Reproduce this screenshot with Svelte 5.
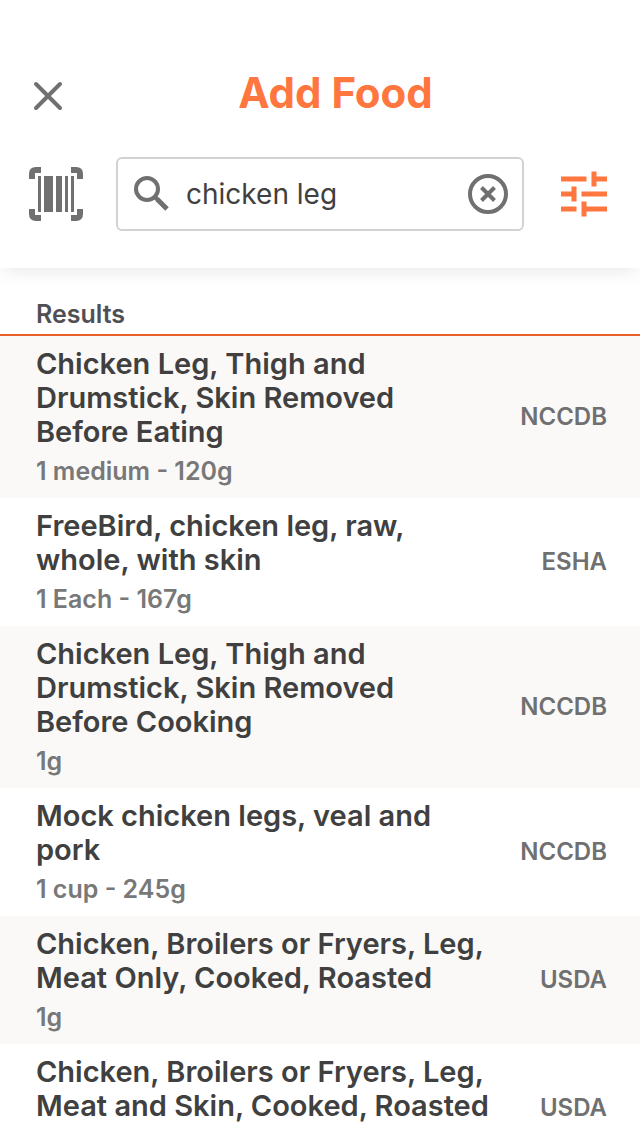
<script lang="ts">
  interface Food {
    name: string;
    serving?: string;
    source: string;
  }

  let query = $state("chicken leg");

  const foods: Food[] = [
    { name: "Chicken Leg, Thigh and Drumstick, Skin Removed Before Eating", serving: "1 medium - 120g", source: "NCCDB" },
    { name: "FreeBird, chicken leg, raw, whole, with skin", serving: "1 Each - 167g", source: "ESHA" },
    { name: "Chicken Leg, Thigh and Drumstick, Skin Removed Before Cooking", serving: "1g", source: "NCCDB" },
    { name: "Mock chicken legs, veal and pork", serving: "1 cup - 245g", source: "NCCDB" },
    { name: "Chicken, Broilers or Fryers, Leg, Meat Only, Cooked, Roasted", serving: "1g", source: "USDA" },
    { name: "Chicken, Broilers or Fryers, Leg, Meat and Skin, Cooked, Roasted", source: "USDA" },
  ];
</script>

<div class="screen">
  <header class="header">
    <div class="title-bar">
      <button class="icon-btn close" aria-label="Close">
        <svg width="32" height="32" viewBox="0 0 32 32">
          <path d="M4 4L28 28M28 4L4 28" fill="none" stroke="#707070" stroke-width="4" stroke-linecap="round" />
        </svg>
      </button>
      <h1>Add Food</h1>
    </div>

    <div class="search-bar">
      <button class="icon-btn" aria-label="Scan barcode">
        <svg width="54" height="54" viewBox="0 0 54 54" fill="#707070">
          <path d="M0 12V7Q0 0 7 0H12V6H6V12ZM42 0H47Q54 0 54 7V12H48V6H42ZM0 42H6V48H12V54H7Q0 54 0 47ZM48 42H54V47Q54 54 47 54H42V48H48Z" />
          <path d="M9 9H12V45H9ZM15 9H24V45H15ZM27 9H33V45H27ZM36 9H39V45H36ZM42 9H45V45H42Z" />
        </svg>
      </button>

      <div class="search-box">
        <svg width="36" height="36" viewBox="0 0 36 36" fill="none" stroke="#707070" stroke-width="4">
          <circle cx="13" cy="13" r="11" />
          <path d="M21 21L24 24" />
          <path d="M23 23L33 33" stroke-width="5" />
        </svg>
        <input type="text" aria-label="Search foods" bind:value={query} />
        <button class="icon-btn" aria-label="Clear search" onclick={() => (query = "")}>
          <svg width="40" height="40" viewBox="0 0 40 40" fill="none" stroke="#707070" stroke-width="4">
            <circle cx="20" cy="20" r="18" />
            <path d="M13.500 13.500L26.500 26.500M26.500 13.500L13.500 26.500" />
          </svg>
        </button>
      </div>

      <button class="icon-btn" aria-label="Filters">
        <svg width="46" height="46" viewBox="0 0 46 46" fill="#ff763f">
          <path d="M0 5.500H25.500V10.500H0ZM30.500 0.500H35.500V5.500H46V10.500H35.500V15.500H30.500Z" />
          <path d="M0 20.500H10.500V15.500H15.500V30.500H10.500V25.500H0ZM20.500 20.500H46V25.500H20.500Z" />
          <path d="M0 35.500H15.500V40.500H0ZM20.500 30.500H25.500V35.500H46V40.500H25.500V45.500H20.500Z" />
        </svg>
      </button>
    </div>
  </header>

  <main class="results">
    <h2>Results</h2>
    <ul>
      {#each foods as food}
        <li>
          <div class="details">
            <p class="name">{food.name}</p>
            {#if food.serving}
              <p class="serving">{food.serving}</p>
            {/if}
          </div>
          <span class="source">{food.source}</span>
        </li>
      {/each}
    </ul>
  </main>
</div>

<style>
.screen {
  display: flex;
  flex-direction: column;
  height: 100vh;
  overflow: hidden;
  background: #fff;
  color: #404040;
  font-family: "Inter", sans-serif;
}

h1, h2, p, ul {
  margin: 0;
  padding: 0;
}

.header {
  flex: none;
  padding: 63px 33px 37px 29px;
  background: #fff;
  box-shadow: 0 6px 18px -4px rgba(0, 0, 0, 0.1);
  z-index: 1;
}

.title-bar {
  display: flex;
  align-items: center;
  padding-left: 3px;
  margin-bottom: 34px;
}

h1 {
  flex: 1;
  text-align: center;
  font-size: 42px;
  font-weight: 700;
  line-height: 60px;
  color: #ff763f;
}

.icon-btn {
  flex: none;
  display: block;
  padding: 0;
  border: none;
  background: none;
  cursor: pointer;
}

.icon-btn svg {
  display: block;
}

.close {
  padding-top: 6px;
}

.search-bar {
  display: flex;
  align-items: center;
  justify-content: space-between;
}

.search-box {
  flex: 1;
  display: flex;
  align-items: center;
  box-sizing: border-box;
  height: 74px;
  min-width: 0;
  margin: 0 37px 0 33px;
  padding: 0 14px 0 16px;
  border: 2px solid #d2d2d2;
  border-radius: 6px;
}

.search-box svg {
  flex: none;
}

.search-box input {
  flex: 1;
  min-width: 0;
  padding: 0 16px;
  border: none;
  outline: none;
  background: none;
  color: #404040;
  font-family: inherit;
  font-size: 28px;
  line-height: 36px;
}

.results {
  flex: 1;
  min-height: 0;
  overflow-y: auto;
  scrollbar-width: none;
}

h2 {
  padding: 30px 36px 4px;
  border-bottom: 2px solid #e8602c;
  font-size: 25px;
  font-weight: 600;
  line-height: 32px;
  color: #505054;
}

ul {
  list-style: none;
}

li {
  display: flex;
  align-items: center;
  justify-content: space-between;
  box-sizing: border-box;
  min-height: 128px;
  padding: 11px 33px 11px 36px;
}

li:nth-child(odd) {
  background: #faf9f8;
}

li:nth-child(even) {
  background: #fff;
}

.details {
  align-self: flex-start;
  width: 80%;
}

.name {
  font-size: 29px;
  font-weight: 600;
  line-height: 34px;
}

.serving {
  padding-top: 6px;
  font-size: 25px;
  font-weight: 600;
  line-height: 32px;
  color: #787878;
}

.source {
  font-size: 24px;
  font-weight: 600;
  line-height: 32px;
  color: #707070;
}
</style>
